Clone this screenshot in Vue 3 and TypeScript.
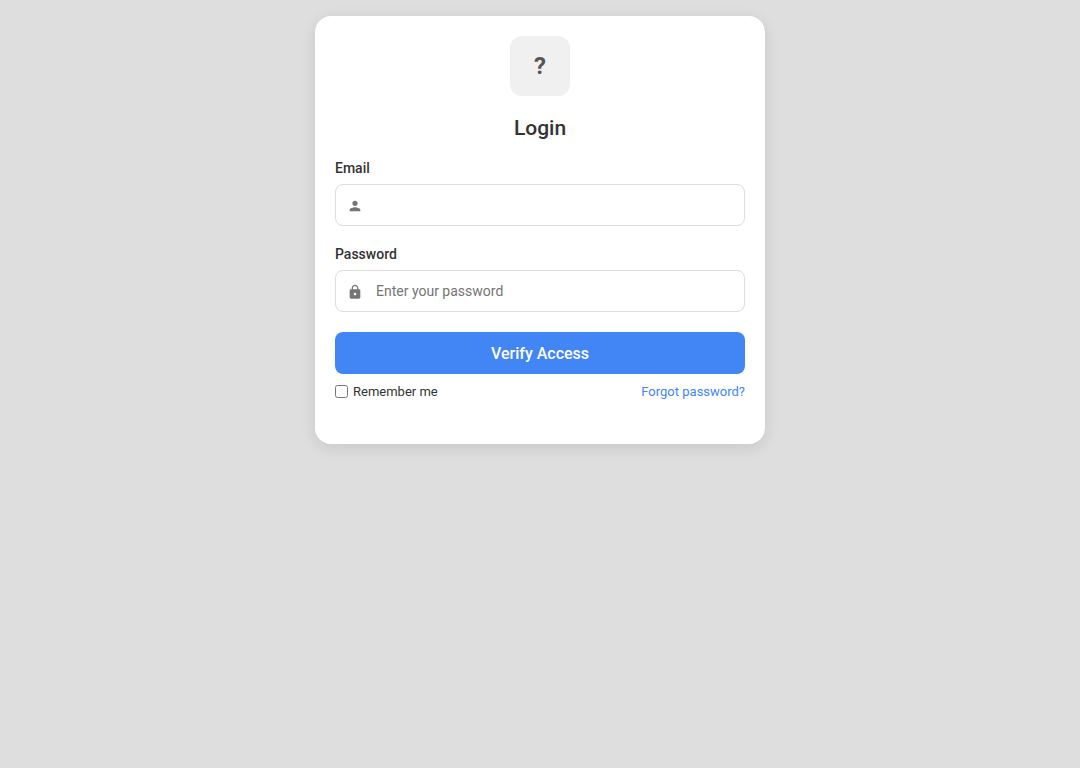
<script setup lang="ts">
import { ref } from 'vue'

const email = ref<string>('')
const password = ref<string>('')
const remember = ref<boolean>(false)
</script>

<template>
  <main class="page">
    <form class="card" @submit.prevent>
      <div class="logo">?</div>
      <h1 class="title">Login</h1>

      <div class="group">
        <label class="label" for="email">Email</label>
        <div class="field">
          <svg class="icon" viewBox="0 0 24 24" aria-hidden="true">
            <path d="M12 12c2.21 0 4-1.79 4-4s-1.79-4-4-4-4 1.79-4 4 1.79 4 4 4zm0 2c-2.67 0-8 1.34-8 4v2h16v-2c0-2.66-5.33-4-8-4z" />
          </svg>
          <input id="email" v-model="email" class="input" type="email" />
        </div>
      </div>

      <div class="group">
        <label class="label" for="password">Password</label>
        <div class="field">
          <svg class="icon" viewBox="0 0 24 24" aria-hidden="true">
            <path d="M18 8h-1V6c0-2.76-2.24-5-5-5S7 3.24 7 6v2H6c-1.1 0-2 .9-2 2v10c0 1.1.9 2 2 2h12c1.1 0 2-.9 2-2V10c0-1.1-.9-2-2-2zm-6 9c-1.1 0-2-.9-2-2s.9-2 2-2 2 .9 2 2-.9 2-2 2zm3.1-9H8.9V6c0-1.71 1.39-3.1 3.1-3.1 1.71 0 3.1 1.39 3.1 3.1v2z" />
          </svg>
          <input id="password" v-model="password" class="input" type="password" placeholder="Enter your password" />
        </div>
      </div>

      <button class="submit" type="submit">Verify Access</button>

      <div class="options">
        <label class="remember" for="remember">
          <input id="remember" v-model="remember" class="check" type="checkbox" />
          Remember me
        </label>
        <a class="forgot" href="#">Forgot password?</a>
      </div>
    </form>
  </main>
</template>

<style>
html,
body {
  background: #dedede;
}
</style>

<style scoped>
.page {
  box-sizing: border-box;
  display: flex;
  justify-content: center;
  align-items: flex-start;
  min-height: 100vh;
  padding: 16px;
  font-family: Roboto, "Liberation Sans", sans-serif;
  color: #333;
}
.card {
  box-sizing: border-box;
  width: 100%;
  max-width: 450px;
  padding: 20px 20px 45px;
  background: #fff;
  border-radius: 16px;
  box-shadow: 0 4px 16px rgba(0, 0, 0, 0.1);
}
.logo {
  display: flex;
  align-items: center;
  justify-content: center;
  width: 60px;
  height: 60px;
  margin: 0 auto 20px;
  border-radius: 12px;
  background: #f0f0f0;
  color: #555;
  font-size: 24px;
  font-weight: 700;
}
.title {
  margin: 0 0 20px;
  font-size: 21px;
  line-height: 24px;
  font-weight: 500;
  text-align: center;
}
.group {
  margin-bottom: 20px;
}
.label {
  display: block;
  margin-bottom: 8px;
  font-size: 14px;
  line-height: 16px;
  font-weight: 500;
}
.field {
  box-sizing: border-box;
  display: flex;
  align-items: center;
  height: 42px;
  border: 1px solid #ddd;
  border-radius: 8px;
}
.field:focus-within {
  border-color: #4285f4;
}
.icon {
  flex: none;
  width: 16px;
  height: 16px;
  margin: 2px 12px 0 11px;
  fill: #757575;
}
.input {
  flex: 1;
  min-width: 0;
  height: 100%;
  padding: 0 12px 0 1px;
  border: 0;
  outline: 0;
  background: transparent;
  color: inherit;
  font: 14px Roboto, "Liberation Sans", sans-serif;
}
.input::placeholder {
  color: #757575;
}
.submit {
  display: block;
  width: 100%;
  height: 42px;
  padding: 0;
  border: 0;
  border-radius: 8px;
  background: #4285f4;
  color: #fff;
  font: 500 16px Roboto, "Liberation Sans", sans-serif;
  cursor: pointer;
}
.options {
  display: flex;
  align-items: center;
  justify-content: space-between;
  margin-top: 10px;
  font-size: 13px;
  line-height: 15px;
}
.remember {
  display: flex;
  align-items: center;
  gap: 5px;
}
.check {
  width: 13px;
  height: 13px;
  margin: 0;
}
.forgot {
  color: #4285f4;
  text-decoration: none;
}
</style>
